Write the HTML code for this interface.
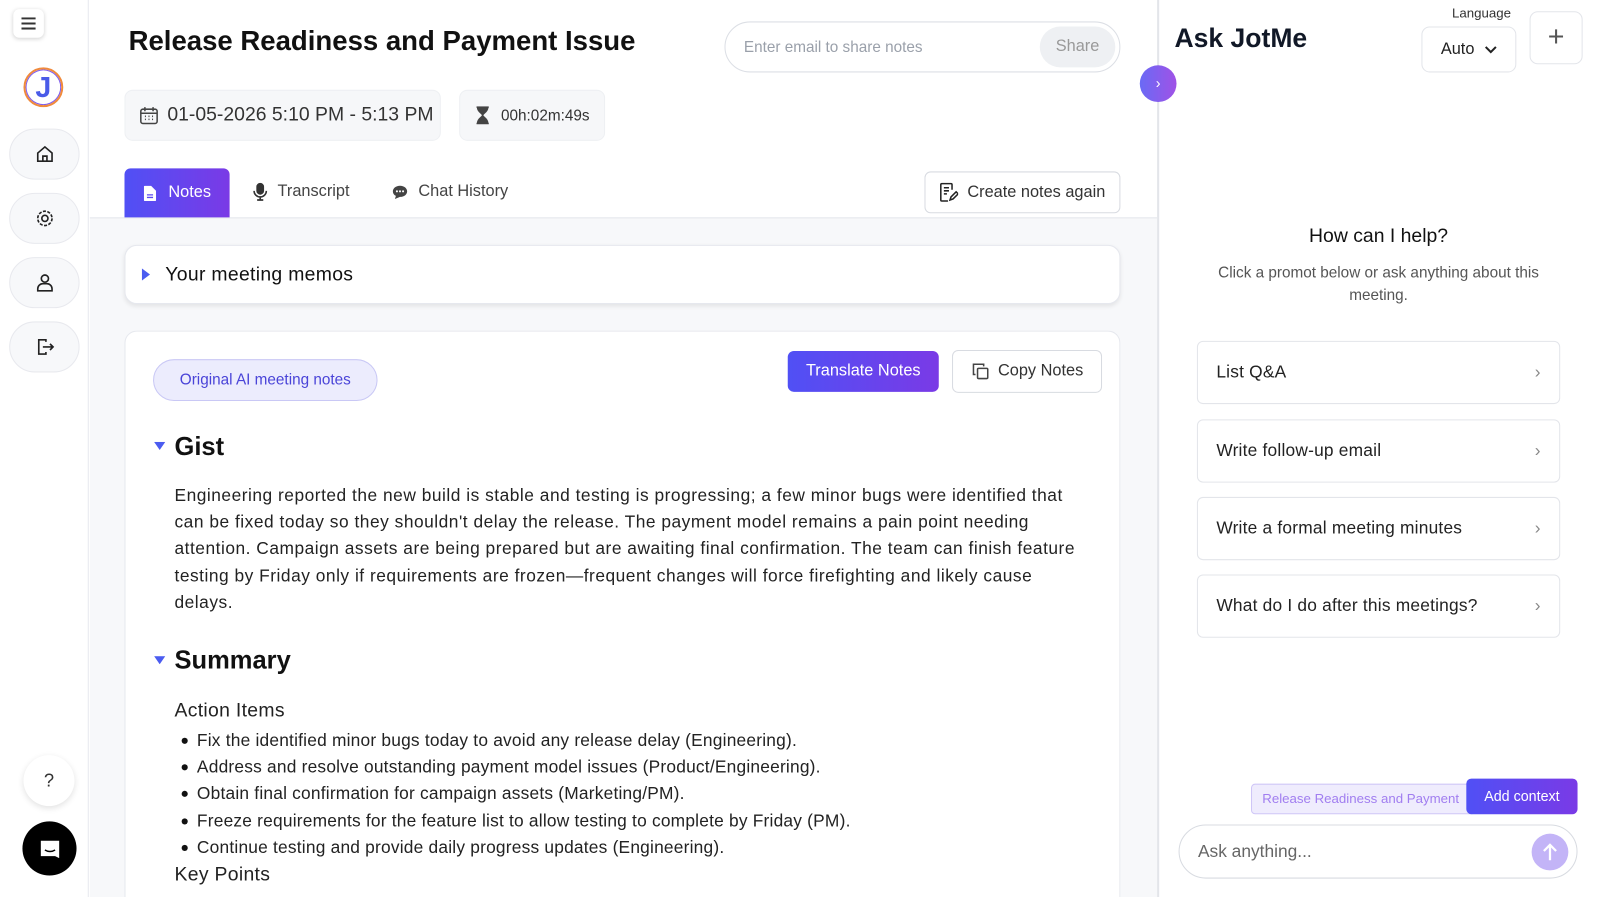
<!DOCTYPE html>
<html style="overflow:hidden;width:1600px;height:897px"><head><meta charset="utf-8"><style>
*{box-sizing:border-box;margin:0;padding:0}
html,body{overflow:hidden}
body{width:1600px;height:897px;font-family:"Liberation Sans",sans-serif;color:#1f2430;background:#fff;position:relative}
#w{position:absolute;left:0;top:0;width:1600px;height:897px;transform:scale(1.0204);transform-origin:0 0}
.abs{position:absolute}
.side{left:0;top:0;width:87px;height:897px;background:#fff;border-right:1px solid #e6e8ee}
.sbtn{position:absolute;left:9px;width:69px;height:50px;border-radius:25px;background:#f7f8fa;border:1px solid #e8e9ee;display:flex;align-items:center;justify-content:center}
.main{left:88px;top:0;width:1046px;height:897px;background:#fff}
.gray{left:88px;top:213px;width:1046px;height:684px;background:#f7f8fa;border-top:1px solid #e4e6eb}
.card{background:#fff;border:1px solid #e6e8ee;border-radius:12px}
.right{left:1134px;top:0;width:466px;height:897px;background:#fff;border-left:2px solid #e3e5ea}
.prompt{position:absolute;left:1173px;width:356px;height:62px;border:1px solid #e3e5ea;border-radius:6px;font-size:17px;color:#222;padding:0 18px;display:flex;align-items:center;justify-content:space-between;letter-spacing:.2px}
ul{list-style:none}
li{position:relative;padding-left:22px}
li:before{content:"";position:absolute;left:7px;top:10px;width:6px;height:6px;border-radius:3px;background:#111}
.tx{letter-spacing:.5px}
</style></head><body><div id="w">
<div class="abs side">
 <div class="abs" style="left:13px;top:9px;width:30px;height:28px;border-radius:6px;background:#fff;box-shadow:0 1px 4px rgba(0,0,0,.18);display:flex;align-items:center;justify-content:center">
  <svg width="14" height="12"><path d="M0 1h14M0 6h14M0 11h14" stroke="#333" stroke-width="2"/></svg></div>
 <div class="abs" style="left:23px;top:66px;width:39px;height:39px;border-radius:50%;border:2px solid #f08a3c;box-shadow:inset 0 0 0 1px #7c5cf0;display:flex;align-items:center;justify-content:center;color:#4a5be8;font-size:28px;font-weight:bold">J</div>
 <div class="sbtn" style="top:126px"><svg width="20" height="20" viewBox="0 0 20 20" fill="none" stroke="#222" stroke-width="1.6"><path d="M3 9l7-6 7 6v8H3zM8 17v-5h4v5"/></svg></div>
 <div class="sbtn" style="top:189px"><svg width="20" height="20" viewBox="0 0 20 20" fill="none" stroke="#222" stroke-width="1.6"><circle cx="10" cy="10" r="3"/><circle cx="10" cy="10" r="7" stroke-dasharray="3 1.4"/></svg></div>
 <div class="sbtn" style="top:252px"><svg width="20" height="20" viewBox="0 0 20 20" fill="none" stroke="#222" stroke-width="1.6"><circle cx="10" cy="6" r="3.5"/><path d="M3 18v-2a5 5 0 015-5h4a5 5 0 015 5v2z"/></svg></div>
 <div class="sbtn" style="top:315px"><svg width="20" height="20" viewBox="0 0 20 20" fill="none" stroke="#222" stroke-width="1.6"><path d="M11 5V3H4v14h7v-2M8 10h10M15 7l3 3-3 3"/></svg></div>
 <div class="abs" style="left:23px;top:740px;width:50px;height:50px;border-radius:50%;background:#fff;box-shadow:0 2px 6px rgba(0,0,0,.12);text-align:center;line-height:50px;font-size:18px;color:#333">?</div>
 <div class="abs" style="left:22px;top:805px;width:53px;height:53px;border-radius:50%;background:#000;display:flex;align-items:center;justify-content:center"><svg width="24" height="24" viewBox="0 0 24 24"><path d="M3 4h18v17l-4-2H3z" fill="#fff"/><path d="M7 13q5 3 10 0" stroke="#000" stroke-width="1.5" fill="none"/></svg></div>
</div>
<div class="abs main"></div>
<div class="abs gray"></div>
<div class="abs" style="left:126px;top:25px;font-size:27px;font-weight:bold;color:#111">Release Readiness and Payment Issue</div>
<div class="abs" style="left:710px;top:21px;width:388px;height:50px;border:1px solid #dcdfe5;border-radius:25px;"><span class="abs" style="left:18px;top:16px;font-size:15px;color:#9aa0aa">Enter email to share notes</span><div class="abs" style="right:4px;top:4px;width:74px;height:40px;border-radius:20px;background:#eef0f3;color:#999;font-size:16px;text-align:center;line-height:40px">Share</div></div>
<div class="abs" style="left:122px;top:88px;width:310px;height:50px;border-radius:8px;background:#f6f7f9;border:1px solid #eef0f3;display:flex;align-items:center;padding-left:13px;font-size:19px;color:#333"><svg width="20" height="20" viewBox="0 0 20 20" fill="none" stroke="#444" stroke-width="1.5" style="margin-right:8px"><rect x="2" y="4" width="16" height="14" rx="2"/><path d="M2 8h16M6 2v4M14 2v4M6 11h1M9.5 11h1M13 11h1M6 14h1M9.5 14h1M13 14h1"/></svg>01-05-2026 5:10 PM - 5:13 PM</div>
<div class="abs" style="left:450px;top:88px;width:143px;height:50px;border-radius:8px;background:#f6f7f9;border:1px solid #eef0f3;display:flex;align-items:center;padding-left:14px;font-size:15px;color:#333"><svg width="16" height="18" viewBox="0 0 16 18" style="margin-right:10px"><path d="M2 1h12M2 17h12M3 1c0 5 5 6 5 8s-5 3-5 8h10c0-5-5-6-5-8s5-3 5-8" fill="#444" stroke="#444" stroke-width="1.5"/></svg>00h:02m:49s</div>
<div class="abs" style="left:122px;top:165px;width:103px;height:48px;border-radius:6px 6px 0 0;background:linear-gradient(90deg,#5050f5,#7a3ae6);color:#fff;font-size:16px;display:flex;align-items:center;padding-left:19px"><svg width="12" height="15" viewBox="0 0 12 15" style="margin-right:12px"><path d="M0 1a1 1 0 011-1h6l5 5v9a1 1 0 01-1 1H1a1 1 0 01-1-1z" fill="#fff"/><path d="M3 9h6M3 11.5h6" stroke="#5a4af0" stroke-width="1.3"/></svg>Notes</div>
<div class="abs" style="left:248px;top:179px;font-size:16px;color:#444;display:flex;align-items:center"><svg width="14" height="18" viewBox="0 0 14 18" fill="none" stroke="#333" stroke-width="1.6" style="margin-right:10px"><rect x="4" y="1" width="6" height="10" rx="3" fill="#333"/><path d="M1 8a6 6 0 0012 0M7 14v3M4 17h6"/></svg>Transcript</div>
<div class="abs" style="left:384px;top:179px;font-size:16px;color:#444;display:flex;align-items:center"><svg width="16" height="16" viewBox="0 0 16 16" style="margin-right:10px"><path d="M8 2c4 0 7 2.5 7 5.5S12 13 8 13l-5 2 1-3c-2-1-3-2.5-3-4.5C1 4.5 4 2 8 2z" fill="#444"/><circle cx="5" cy="7.5" r="1" fill="#fff"/><circle cx="8" cy="7.5" r="1" fill="#fff"/><circle cx="11" cy="7.5" r="1" fill="#fff"/></svg>Chat History</div>
<div class="abs" style="left:906px;top:168px;width:192px;height:41px;border:1px solid #d8dbe1;border-radius:6px;display:flex;align-items:center;padding-left:14px;font-size:16px;color:#333;background:#fff"><svg width="18" height="19" viewBox="0 0 18 19" fill="none" stroke="#222" stroke-width="1.5" style="margin-right:9px"><path d="M12 7V2a1 1 0 00-1-1H2a1 1 0 00-1 1v15a1 1 0 001 1h6M4 5h5M4 8h5M4 11h3M10 17l1-3 5-5 2 2-5 5z"/></svg>Create notes again</div>
<div class="abs card" style="left:122px;top:240px;width:976px;height:58px;box-shadow:0 2px 4px rgba(0,0,0,.08)"><svg class="abs" style="left:16px;top:22px" width="8" height="12"><path d="M0 0l8 6-8 6z" fill="#4b5cf0"/></svg><span class="abs" style="left:39px;top:18px;font-size:19px;color:#111;letter-spacing:.3px">Your meeting memos</span></div>
<div class="abs card" style="left:122px;top:324px;width:976px;height:573px;border-radius:12px 12px 0 0;border-bottom:none;overflow:hidden">
 <div class="abs" style="left:27px;top:27px;width:220px;height:41px;border-radius:21px;background:#ececfd;border:1px solid #c9c8f5;color:#4a44d8;font-size:15px;text-align:center;line-height:39px">Original AI meeting notes</div>
 <div class="abs" style="left:649px;top:19px;width:148px;height:40px;border-radius:6px;background:linear-gradient(90deg,#5050f5,#7a3ae6);color:#fff;font-size:16px;text-align:center;line-height:40px">Translate Notes</div>
 <div class="abs" style="left:810px;top:18px;width:147px;height:42px;border-radius:6px;border:1px solid #d8dbe1;display:flex;align-items:center;padding-left:18px;font-size:16px;color:#333"><svg width="18" height="18" viewBox="0 0 18 18" fill="none" stroke="#444" stroke-width="1.5" style="margin-right:8px"><path d="M4 12H2V2h10v2"/><rect x="6" y="6" width="10" height="10" rx="1"/></svg>Copy Notes</div>
 <svg class="abs" style="left:28px;top:108px" width="11" height="8"><path d="M0 0h11L5.5 8z" fill="#4b5cf0"/></svg>
 <div class="abs" style="left:48px;top:99px;font-size:25px;font-weight:bold;color:#111">Gist</div>
 <div class="abs tx" style="left:48px;top:148px;width:900px;font-size:17px;line-height:26.2px;color:#222">Engineering reported the new build is stable and testing is progressing; a few minor bugs were identified that can be fixed today so they shouldn't delay the release. The payment model remains a pain point needing attention. Campaign assets are being prepared but are awaiting final confirmation. The team can finish feature testing by Friday only if requirements are frozen—frequent changes will force firefighting and likely cause delays.</div>
 <svg class="abs" style="left:28px;top:318px" width="11" height="8"><path d="M0 0h11L5.5 8z" fill="#4b5cf0"/></svg>
 <div class="abs" style="left:48px;top:308px;font-size:25px;font-weight:bold;color:#111">Summary</div>
 <div class="abs" style="left:48px;top:361px;font-size:19px;color:#222;letter-spacing:.3px">Action Items</div>
 <ul class="abs" style="left:48px;top:388px;font-size:17px;line-height:26.2px;color:#222;letter-spacing:.2px">
  <li>Fix the identified minor bugs today to avoid any release delay (Engineering).</li>
  <li>Address and resolve outstanding payment model issues (Product/Engineering).</li>
  <li>Obtain final confirmation for campaign assets (Marketing/PM).</li>
  <li>Freeze requirements for the feature list to allow testing to complete by Friday (PM).</li>
  <li>Continue testing and provide daily progress updates (Engineering).</li>
 </ul>
 <div class="abs" style="left:48px;top:522px;font-size:19px;color:#222;letter-spacing:.3px">Key Points</div>
</div>
<div class="abs right"></div>
<div class="abs" style="left:1117px;top:64px;width:36px;height:36px;border-radius:50%;background:linear-gradient(90deg,#6a6af5,#a052e6);color:#fff;text-align:center;line-height:34px;font-size:14px">›</div>
<div class="abs" style="left:1151px;top:22px;font-size:26px;font-weight:bold;color:#111827">Ask JotMe</div>
<div class="abs" style="left:1423px;top:5px;font-size:13px;color:#333">Language</div>
<div class="abs" style="left:1393px;top:26px;width:93px;height:45px;border:1px solid #e3e5ea;border-radius:8px;display:flex;align-items:center;justify-content:center;font-size:16px;color:#222">Auto<svg width="12" height="8" style="margin-left:10px"><path d="M1 1l5 5 5-5" stroke="#222" stroke-width="2" fill="none"/></svg></div>
<div class="abs" style="left:1499px;top:11px;width:52px;height:52px;border:1px solid #e3e5ea;border-radius:8px;text-align:center;line-height:48px;font-size:28px;color:#555;font-weight:300">+</div>
<div class="abs" style="left:1173px;top:221px;width:356px;text-align:center;font-size:19px;color:#111">How can I help?</div>
<div class="abs" style="left:1175px;top:257px;width:352px;text-align:center;font-size:15px;line-height:22px;color:#555">Click a promot below or ask anything about this meeting.</div>
<div class="prompt" style="top:334px">List Q&amp;A<span style="color:#888">›</span></div>
<div class="prompt" style="top:411px">Write follow-up email<span style="color:#888">›</span></div>
<div class="prompt" style="top:487px">Write a formal meeting minutes<span style="color:#888">›</span></div>
<div class="prompt" style="top:563px">What do I do after this meetings?<span style="color:#888">›</span></div>
<div class="abs" style="left:1226px;top:768px;width:220px;height:30px;border-radius:4px;background:#efecfd;border:1px solid #cfc6f7;color:#a17ef0;font-size:13px;line-height:28px;padding-left:10px;overflow:hidden;white-space:nowrap">Release Readiness and Payment</div>
<div class="abs" style="left:1437px;top:763px;width:109px;height:35px;border-radius:5px;background:linear-gradient(90deg,#5050f5,#7a3ae6);color:#fff;font-size:14px;text-align:center;line-height:35px">Add context</div>
<div class="abs" style="left:1155px;top:808px;width:391px;height:53px;border:1px solid #d8dbe1;border-radius:27px"><span class="abs" style="left:18px;top:16px;font-size:17px;color:#666">Ask anything...</span><div class="abs" style="left:345px;top:8px;width:36px;height:36px;border-radius:50%;background:#c3b4f7;display:flex;align-items:center;justify-content:center"><svg width="16" height="18"><path d="M8 17V2M2 8l6-6 6 6" stroke="#fff" stroke-width="2.2" fill="none"/></svg></div></div>
</div></body></html>
